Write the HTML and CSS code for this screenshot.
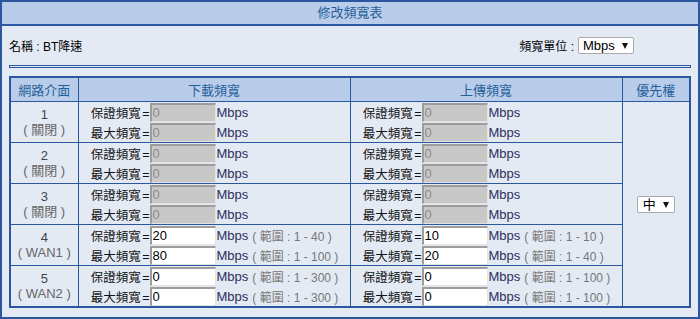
FILE: index.html
```html
<!DOCTYPE html>
<html lang="zh-Hant">
<head>
    <meta charset="UTF-8">
    <title>修改頻寬表</title>
    <link rel="stylesheet" href="styles.css">
</head>
<body>
    <div class="panel">
        <div class="panel-title">修改頻寬表</div>
        <div class="panel-body">
            <div class="name-row">
                <span>名稱 : BT降速</span>
                <span class="unit-pick">
                    頻寬單位 :
                    <span class="select-wrap">
                        <select class="select select-unit">
                            <option>Mbps</option>
                            <option>Kbps</option>
                        </select>
                    </span>
                </span>
            </div>
            <div class="divider"></div>

            <table class="bw-table">
                <colgroup>
                    <col class="col-port">
                    <col class="col-bw">
                    <col class="col-bw">
                    <col>
                </colgroup>
                <tr>
                    <th>網路介面</th>
                    <th>下載頻寬</th>
                    <th>上傳頻寬</th>
                    <th>優先權</th>
                </tr>
                <tr>
                    <td class="port">1<br><span class="state">( 關閉 )</span></td>
                    <td class="bw">
                        <div class="line"><span class="lbl">保證頻寬 =</span><input value="0" disabled><span class="unit">Mbps</span></div>
                        <div class="line"><span class="lbl">最大頻寬 =</span><input value="0" disabled><span class="unit">Mbps</span></div>
                    </td>
                    <td class="bw">
                        <div class="line"><span class="lbl">保證頻寬 =</span><input value="0" disabled><span class="unit">Mbps</span></div>
                        <div class="line"><span class="lbl">最大頻寬 =</span><input value="0" disabled><span class="unit">Mbps</span></div>
                    </td>
                    <td class="prio" rowspan="5">
                        <span class="select-wrap">
                            <select class="select select-prio">
                                <option>高</option>
                                <option selected>中</option>
                                <option>低</option>
                            </select>
                        </span>
                    </td>
                </tr>
                <tr>
                    <td class="port">2<br><span class="state">( 關閉 )</span></td>
                    <td class="bw">
                        <div class="line"><span class="lbl">保證頻寬 =</span><input value="0" disabled><span class="unit">Mbps</span></div>
                        <div class="line"><span class="lbl">最大頻寬 =</span><input value="0" disabled><span class="unit">Mbps</span></div>
                    </td>
                    <td class="bw">
                        <div class="line"><span class="lbl">保證頻寬 =</span><input value="0" disabled><span class="unit">Mbps</span></div>
                        <div class="line"><span class="lbl">最大頻寬 =</span><input value="0" disabled><span class="unit">Mbps</span></div>
                    </td>
                </tr>
                <tr>
                    <td class="port">3<br><span class="state">( 關閉 )</span></td>
                    <td class="bw">
                        <div class="line"><span class="lbl">保證頻寬 =</span><input value="0" disabled><span class="unit">Mbps</span></div>
                        <div class="line"><span class="lbl">最大頻寬 =</span><input value="0" disabled><span class="unit">Mbps</span></div>
                    </td>
                    <td class="bw">
                        <div class="line"><span class="lbl">保證頻寬 =</span><input value="0" disabled><span class="unit">Mbps</span></div>
                        <div class="line"><span class="lbl">最大頻寬 =</span><input value="0" disabled><span class="unit">Mbps</span></div>
                    </td>
                </tr>
                <tr>
                    <td class="port">4<br><span class="state">( WAN1 )</span></td>
                    <td class="bw">
                        <div class="line"><span class="lbl">保證頻寬 =</span><input value="20"><span class="unit">Mbps</span><span class="range">( 範圍 : 1 - 40 )</span></div>
                        <div class="line"><span class="lbl">最大頻寬 =</span><input value="80"><span class="unit">Mbps</span><span class="range">( 範圍 : 1 - 100 )</span></div>
                    </td>
                    <td class="bw">
                        <div class="line"><span class="lbl">保證頻寬 =</span><input value="10"><span class="unit">Mbps</span><span class="range">( 範圍 : 1 - 10 )</span></div>
                        <div class="line"><span class="lbl">最大頻寬 =</span><input value="20"><span class="unit">Mbps</span><span class="range">( 範圍 : 1 - 40 )</span></div>
                    </td>
                </tr>
                <tr>
                    <td class="port">5<br><span class="state">( WAN2 )</span></td>
                    <td class="bw">
                        <div class="line"><span class="lbl">保證頻寬 =</span><input value="0"><span class="unit">Mbps</span><span class="range">( 範圍 : 1 - 300 )</span></div>
                        <div class="line"><span class="lbl">最大頻寬 =</span><input value="0"><span class="unit">Mbps</span><span class="range">( 範圍 : 1 - 300 )</span></div>
                    </td>
                    <td class="bw">
                        <div class="line"><span class="lbl">保證頻寬 =</span><input value="0"><span class="unit">Mbps</span><span class="range">( 範圍 : 1 - 100 )</span></div>
                        <div class="line"><span class="lbl">最大頻寬 =</span><input value="0"><span class="unit">Mbps</span><span class="range">( 範圍 : 1 - 100 )</span></div>
                    </td>
                </tr>
            </table>
        </div>
    </div>
</body>
</html>
```

FILE: styles.css
```css
body {
    margin: 0;
    font-family: "Liberation Sans", "Noto Sans CJK TC", sans-serif;
    font-size: 13px;
    color: #222;
}

.panel {
    width: 700px;
    height: 319px;
    box-sizing: border-box;
    border: 2px solid #2b57a0;
    background-color: #e3eaf4;
}

.panel-title {
    height: 22px;
    line-height: 22px;
    background-color: #b9cce9;
    border-bottom: 2px solid #2b57a0;
    text-align: center;
    color: #1f6199;
}

.panel-body {
    padding: 0 7px 9px;
}

/* name + unit selector */
.name-row {
    height: 39px;
    display: flex;
    align-items: center;
    justify-content: space-between;
    padding-right: 57px;
    font-size: 12px;
    color: #000;
}

.unit-pick {
    display: flex;
    align-items: center;
    gap: 4px;
}

.divider {
    height: 1px;
    border: 1px solid #2b57a0;
    margin-bottom: 8px;
}

.select-wrap {
    position: relative;
    display: inline-block;
}

.select-wrap::after {
    content: "";
    position: absolute;
    top: 6px;
    right: 6px;
    border-left: 3.5px solid transparent;
    border-right: 3.5px solid transparent;
    border-top: 6px solid #111;
    pointer-events: none;
}

.select {
    appearance: none;
    -webkit-appearance: none;
    display: block;
    height: 17px;
    box-sizing: border-box;
    border: 1px solid #a9a9a9;
    border-radius: 2px;
    background-color: #fff;
    color: #000;
    font-family: "Liberation Sans", "Noto Sans CJK TC", sans-serif;
    font-size: 13px;
    line-height: 15px;
    padding: 0 0 0 4px;
    margin: 0;
}

.select-unit {
    width: 56px;
}

.select-prio {
    width: 38px;
    padding-left: 5px;
}

/* bandwidth table */
.bw-table {
    width: 682px;
    border-collapse: collapse;
    table-layout: fixed;
    border: 2px solid #2b57a0;
}

.col-port {
    width: 68px;
}

.col-bw {
    width: 272px;
}

.bw-table th,
.bw-table td {
    border: 1px solid #2b57a0;
    padding: 0;
}

.bw-table th {
    height: 23px;
    background-color: #b9cce9;
    color: #1f6199;
    font-weight: normal;
}

.bw-table td {
    height: 40px;
}

.port {
    text-align: center;
    line-height: 15px;
    color: #444;
}

.port .state {
    color: #666;
}

.bw {
    padding-left: 12px !important;
}

.line {
    display: flex;
    align-items: center;
    height: 20px;
    white-space: nowrap;
}

.lbl {
    width: 59px;
    text-align: right;
    font-size: 12.5px;
    word-spacing: -2px;
    color: #111;
}

.line input {
    width: 66px;
    height: 19px;
    box-sizing: border-box;
    margin: 0 1px 0 0;
    padding: 0 1px;
    border-style: solid;
    border-width: 2px 1px 1px 2px;
    border-color: #9c9c9c #e2e2e2 #e2e2e2 #9c9c9c;
    background-color: #fff;
    color: #000;
    font-family: "Liberation Sans", sans-serif;
    font-size: 13px;
}

.line input:disabled {
    background-color: #c8c8c8;
    color: #8a8a8a;
}

.unit {
    color: #2f2f5a;
}

.range {
    margin-left: 4px;
    font-size: 12px;
    color: #777;
}

.prio {
    text-align: center;
    vertical-align: middle;
}
```
